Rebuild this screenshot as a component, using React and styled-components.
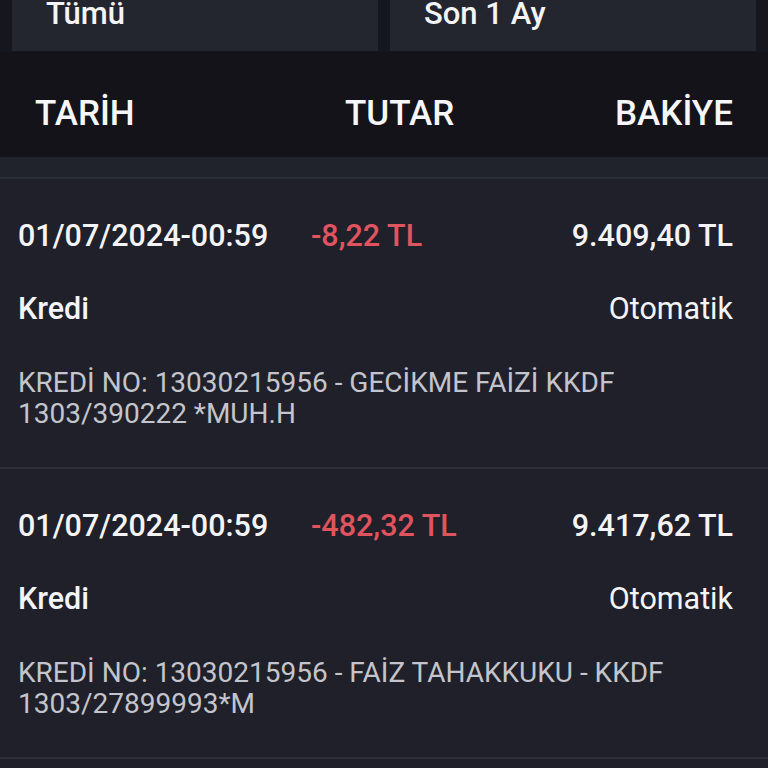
import styled, { createGlobalStyle } from 'styled-components'

const GlobalStyle = createGlobalStyle`
  html, body {
    margin: 0;
    padding: 0;
    background: #1f2029;
  }
  body {
    font-family: Roboto, "Liberation Sans", sans-serif;
    -webkit-font-smoothing: antialiased;
  }
`

const Page = styled.div`
  width: 768px;
  height: 768px;
  overflow: hidden;
  background: #1f2029;
`

const FilterBar = styled.div`
  display: grid;
  grid-template-columns: 1fr 1fr;
  gap: 12px;
  padding: 0 12px 1px;
  margin-top: -20px;
  background: #16171e;
`

const FilterBox = styled.div`
  background: #23252f;
  padding: 14px 34px 17px;
  font-size: 31px;
  line-height: 40px;
  font-weight: 500;
  color: #f4f4f6;
`

const Header = styled.div`
  display: grid;
  grid-template-columns: 310px auto 1fr;
  padding: 42px 35px 23px;
  background: #131319;
  font-size: 35px;
  line-height: 40px;
  font-weight: 500;
  color: #f6f6f8;
`

const HeaderCell = styled.div`
  text-align: ${p => p.align || 'left'};
`

const Strip = styled.div`
  height: 20px;
  background: #21232c;
  border-bottom: 2px solid #2c2e39;
`

const Row = styled.div`
  padding: 37px 35px 38px 18px;
  border-bottom: 2px solid #2c2e39;
  background: #1f2029;
`

const TopLine = styled.div`
  display: grid;
  grid-template-columns: 293px auto 1fr;
  font-size: 30.5px;
  line-height: 40px;
  font-weight: 500;
  color: #f4f4f6;
`

const Amount = styled.span`
  color: #e0545f;
`

const Balance = styled.span`
  text-align: right;
`

const MidLine = styled.div`
  display: flex;
  justify-content: space-between;
  margin-top: 33px;
  font-size: 30.5px;
  line-height: 40px;
  color: #f4f4f6;
`

const Kind = styled.span`
  font-weight: 500;
`

const Channel = styled.span`
  font-weight: 400;
`

const Desc = styled.div`
  margin-top: 38px;
  font-size: 28px;
  line-height: 31px;
  color: #c4c5cc;
  padding-right: 60px;
`

const rows = [
  {
    date: '01/07/2024-00:59',
    amount: '-8,22 TL',
    balance: '9.409,40 TL',
    kind: 'Kredi',
    channel: 'Otomatik',
    desc: ['KREDİ NO: 13030215956 - GECİKME FAİZİ KKDF', '1303/390222 *MUH.H'],
  },
  {
    date: '01/07/2024-00:59',
    amount: '-482,32 TL',
    balance: '9.417,62 TL',
    kind: 'Kredi',
    channel: 'Otomatik',
    desc: ['KREDİ NO: 13030215956 - FAİZ TAHAKKUKU - KKDF', '1303/27899993*M'],
  },
  {
    date: '01/07/2024-00:59',
    amount: '-12,40 TL',
    balance: '9.900,00 TL',
    kind: 'Kredi',
    channel: 'Otomatik',
    desc: ['KREDİ NO: 13030215956', ''],
  },
]

function App () {
  return (
    <Page>
      <GlobalStyle />
      <FilterBar>
        <FilterBox>Tümü</FilterBox>
        <FilterBox>Son 1 Ay</FilterBox>
      </FilterBar>
      <Header>
        <HeaderCell>TARİH</HeaderCell>
        <HeaderCell>TUTAR</HeaderCell>
        <HeaderCell align="right">BAKİYE</HeaderCell>
      </Header>
      <Strip />
      {rows.map((r, i) => (
        <Row key={i}>
          <TopLine>
            <span>{r.date}</span>
            <Amount>{r.amount}</Amount>
            <Balance>{r.balance}</Balance>
          </TopLine>
          <MidLine>
            <Kind>{r.kind}</Kind>
            <Channel>{r.channel}</Channel>
          </MidLine>
          <Desc>
            {r.desc[0]}
            <br />
            {r.desc[1]}
          </Desc>
        </Row>
      ))}
    </Page>
  )
}

export default App
